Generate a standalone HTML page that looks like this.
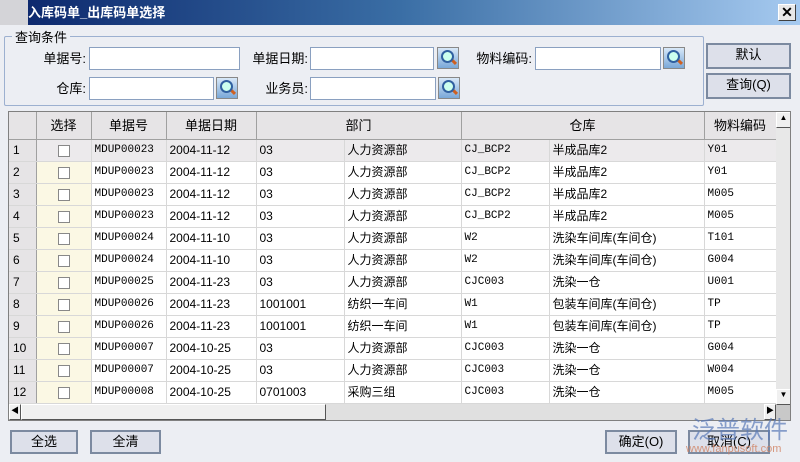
<!DOCTYPE html><html><head><meta charset="utf-8"><style>
*{box-sizing:border-box;margin:0;padding:0}
body{width:800px;height:462px;overflow:hidden;background:#eceef3;font-family:"Liberation Sans","Noto Sans CJK SC",sans-serif;font-size:12px;color:#000;position:relative}
.a{position:absolute}
.title{left:0;top:0;width:800px;height:25px;background:linear-gradient(90deg,#0a246a,#3a6ea5 50%,#a6caf0);color:#fff;font-weight:bold;font-size:13px;line-height:25px;padding-left:28px}
.tl{left:0;top:0;width:28px;height:25px;background:#d4d4d8}
.x{left:778px;top:4px;width:18px;height:17px;background:#e8e8e8;border:1px solid #fff;border-right-color:#404040;border-bottom-color:#404040;font-size:14px;font-weight:bold;line-height:14px;text-align:center;color:#000}
.grp{left:4px;top:36px;width:700px;height:70px;border:1px solid #9cb0d0;border-radius:2px}
.gl{left:12px;top:27px;background:#eceef3;padding:0 3px;font-size:13px}
.in{background:#fff;border:1px solid #8aa0c0;height:23px}
.ic{width:22px;height:22px;border:1px solid #888;background:linear-gradient(#d8e8f8,#7aa8d8)}
.ic:after{content:"";position:absolute;left:3px;top:2px;width:9px;height:9px;border:2px solid #3060a0;border-radius:50%;background:#cfe}
.ic:before{content:"";position:absolute;left:12px;top:12px;width:7px;height:3px;background:#d06020;transform:rotate(45deg)}
.lb{font-size:13px;text-align:right}
.btn{background:#dde0ea;border:2px solid #7c8aa0;text-align:center;font-size:13px;line-height:19px}
.grid{left:8px;top:111px;width:783px;height:310px;border:1px solid #808080;background:#c8c8c8;overflow:hidden}
table{border-collapse:collapse;table-layout:fixed;position:absolute;left:0;top:0}
td{height:22px;line-height:20px;border-right:1px solid #d8d8d8;border-bottom:1px solid #d8d8d8;background:#fff;padding:0 3px;white-space:nowrap;overflow:hidden;font-size:12px;vertical-align:middle}
th{height:27px;line-height:25px;background:#e6e4e6;border-right:1px solid #a0a0a0;border-bottom:1px solid #a0a0a0;font-weight:normal;font-size:13px;vertical-align:middle}
td.n{background:#e6e4e6;border-right-color:#a0a0a0;padding-left:4px}
td.c{background:#fbf8e4;text-align:center;padding:0}
.cb{display:inline-block;width:12px;height:12px;border:1px solid #888;background:#fff;vertical-align:middle}
tr.s td{background:#eceaec}
tr.s td.n{background:#e6e4e6}
.m{font-family:"Liberation Mono",monospace;font-size:11px;line-height:20px}
.vs{left:767px;top:0;width:15px;height:293px;background:#e8e8e8}
.hs{left:0;top:292px;width:767px;height:16px;background:#e0e0e0}
.sb{background:#f0f0f0;border:1px solid #fff;border-right-color:#555;border-bottom-color:#555;font-size:8px;text-align:center}
</style></head><body>
<div class="a title">入库码单_出库码单选择</div><div class="a tl"></div><div class="a x">✕</div>
<div class="a grp"></div><div class="a gl">查询条件</div>
<div class="a lb" style="left:20px;top:48px;width:66px">单据号:</div>
<div class="a in" style="left:89px;top:47px;width:151px"></div>
<div class="a lb" style="left:236px;top:48px;width:72px">单据日期:</div>
<div class="a in" style="left:310px;top:47px;width:124px"></div>
<div class="a ic" style="left:437px;top:47px"></div>
<div class="a lb" style="left:462px;top:48px;width:70px">物料编码:</div>
<div class="a in" style="left:535px;top:47px;width:126px"></div>
<div class="a ic" style="left:663px;top:47px"></div>
<div class="a lb" style="left:20px;top:78px;width:66px">仓库:</div>
<div class="a in" style="left:89px;top:77px;width:125px"></div>
<div class="a ic" style="left:216px;top:77px"></div>
<div class="a lb" style="left:236px;top:78px;width:72px">业务员:</div>
<div class="a in" style="left:310px;top:77px;width:126px"></div>
<div class="a ic" style="left:438px;top:77px"></div>
<div class="a btn" style="left:706px;top:43px;width:85px;height:26px">默认</div>
<div class="a btn" style="left:706px;top:73px;width:85px;height:26px">查询(Q)</div>
<div class="a grid">
<table style="width:767px">
<colgroup><col style="width:27px"><col style="width:55px"><col style="width:75px"><col style="width:90px"><col style="width:88px"><col style="width:117px"><col style="width:88px"><col style="width:155px"><col style="width:72px"></colgroup>
<tr><th></th><th>选择</th><th>单据号</th><th>单据日期</th><th colspan="2">部门</th><th colspan="2">仓库</th><th>物料编码</th></tr>
<tr class="s"><td class="n">1</td><td class="c"><span class="cb"></span></td><td class="m">MDUP00023</td><td>2004-11-12</td><td>03</td><td>人力资源部</td><td class="m">CJ_BCP2</td><td>半成品库2</td><td class="m">Y01</td></tr>
<tr><td class="n">2</td><td class="c"><span class="cb"></span></td><td class="m">MDUP00023</td><td>2004-11-12</td><td>03</td><td>人力资源部</td><td class="m">CJ_BCP2</td><td>半成品库2</td><td class="m">Y01</td></tr>
<tr><td class="n">3</td><td class="c"><span class="cb"></span></td><td class="m">MDUP00023</td><td>2004-11-12</td><td>03</td><td>人力资源部</td><td class="m">CJ_BCP2</td><td>半成品库2</td><td class="m">M005</td></tr>
<tr><td class="n">4</td><td class="c"><span class="cb"></span></td><td class="m">MDUP00023</td><td>2004-11-12</td><td>03</td><td>人力资源部</td><td class="m">CJ_BCP2</td><td>半成品库2</td><td class="m">M005</td></tr>
<tr><td class="n">5</td><td class="c"><span class="cb"></span></td><td class="m">MDUP00024</td><td>2004-11-10</td><td>03</td><td>人力资源部</td><td class="m">W2</td><td>洗染车间库(车间仓)</td><td class="m">T101</td></tr>
<tr><td class="n">6</td><td class="c"><span class="cb"></span></td><td class="m">MDUP00024</td><td>2004-11-10</td><td>03</td><td>人力资源部</td><td class="m">W2</td><td>洗染车间库(车间仓)</td><td class="m">G004</td></tr>
<tr><td class="n">7</td><td class="c"><span class="cb"></span></td><td class="m">MDUP00025</td><td>2004-11-23</td><td>03</td><td>人力资源部</td><td class="m">CJC003</td><td>洗染一仓</td><td class="m">U001</td></tr>
<tr><td class="n">8</td><td class="c"><span class="cb"></span></td><td class="m">MDUP00026</td><td>2004-11-23</td><td>1001001</td><td>纺织一车间</td><td class="m">W1</td><td>包装车间库(车间仓)</td><td class="m">TP</td></tr>
<tr><td class="n">9</td><td class="c"><span class="cb"></span></td><td class="m">MDUP00026</td><td>2004-11-23</td><td>1001001</td><td>纺织一车间</td><td class="m">W1</td><td>包装车间库(车间仓)</td><td class="m">TP</td></tr>
<tr><td class="n">10</td><td class="c"><span class="cb"></span></td><td class="m">MDUP00007</td><td>2004-10-25</td><td>03</td><td>人力资源部</td><td class="m">CJC003</td><td>洗染一仓</td><td class="m">G004</td></tr>
<tr><td class="n">11</td><td class="c"><span class="cb"></span></td><td class="m">MDUP00007</td><td>2004-10-25</td><td>03</td><td>人力资源部</td><td class="m">CJC003</td><td>洗染一仓</td><td class="m">W004</td></tr>
<tr><td class="n">12</td><td class="c"><span class="cb"></span></td><td class="m">MDUP00008</td><td>2004-10-25</td><td>0701003</td><td>采购三组</td><td class="m">CJC003</td><td>洗染一仓</td><td class="m">M005</td></tr>
</table>
<div class="a vs"><div class="a sb" style="left:0;top:0;width:15px;height:16px">▲</div><div class="a sb" style="left:0;top:277px;width:15px;height:16px">▼</div></div>
<div class="a hs"><div class="a sb" style="left:0;top:0;width:12px;height:16px">◀</div><div class="a sb" style="left:12px;top:0;width:305px;height:16px"></div><div class="a sb" style="left:755px;top:0;width:12px;height:16px">▶</div></div>
</div>
<div class="a btn" style="left:10px;top:430px;width:68px;height:24px">全选</div>
<div class="a btn" style="left:90px;top:430px;width:71px;height:24px">全清</div>
<div class="a btn" style="left:605px;top:430px;width:72px;height:24px">确定(O)</div>
<div class="a btn" style="left:688px;top:430px;width:82px;height:24px">取消(C)</div>
<div class="a" style="left:692px;top:418px;font-size:24px;line-height:26px;white-space:nowrap;color:#5a7ab8;opacity:.7">泛普软件</div>
<div class="a" style="left:686px;top:443px;font-size:11px;white-space:nowrap;color:#d08060;opacity:.8">www.fanpusoft.com</div>
</body></html>
